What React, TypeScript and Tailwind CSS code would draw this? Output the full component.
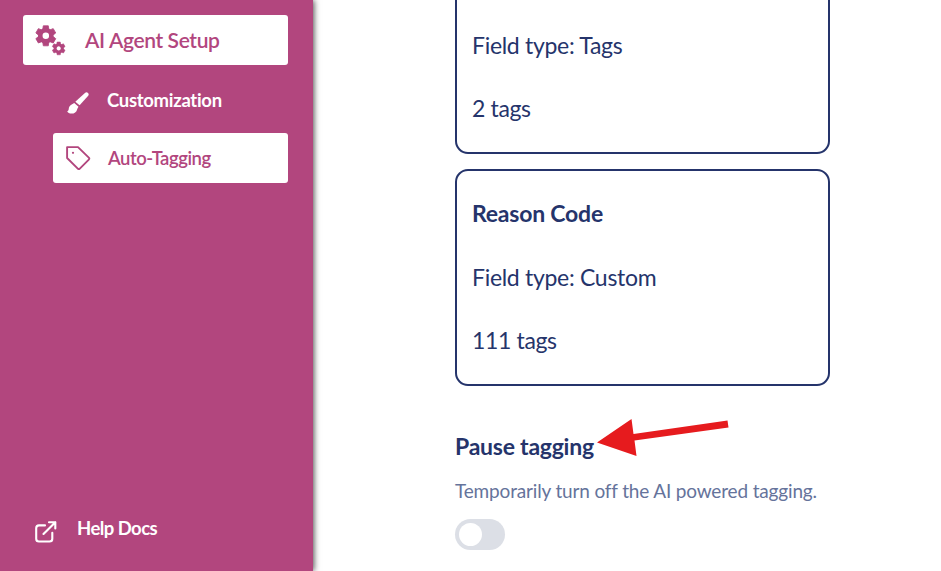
import type { ReactNode } from "react";

function Gear({ cx, cy, r }: { cx: number; cy: number; r: number }) {
  const hub = r * 0.7;
  return (
    <g transform={`translate(${cx} ${cy})`}>
      {[0, 60, 120, 180, 240, 300].map((a) => (
        <path
          key={a}
          transform={`rotate(${a})`}
          d={`M${-r * 0.31} ${-hub * 0.85}L${-r * 0.25} ${-r}H${r * 0.25}L${r * 0.31} ${-hub * 0.85}Z`}
          fill="currentColor"
          stroke="currentColor"
          strokeWidth={r * 0.08}
          strokeLinejoin="round"
        />
      ))}
      <circle r={r * 0.55} fill="none" stroke="currentColor" strokeWidth={r * 0.45} />
    </g>
  );
}

function Gears() {
  return (
    <svg width="32" height="32" viewBox="0 0 32 32" className="mt-px shrink-0">
      <Gear cx={10.8} cy={10.8} r={10} />
      <Gear cx={23.7} cy={23.4} r={6.4} />
    </svg>
  );
}

function Brush() {
  return (
    <svg width="22" height="22" viewBox="0 0 22 22" className="mt-[5px] shrink-0" fill="currentColor">
      <path d="M18.2 0.8Q19.6 -0.3 21 0.9Q22.3 2.2 21.2 3.7L12.6 13.2L8.3 9.7Z" />
      <path d="M7.2 10.8L11.5 14.5Q10.4 16 10.2 17C9.6 20 7.2 21.4 4.6 21.4C2.4 21.4 0.8 20.5 0.2 19C1.8 18.8 1.6 17.2 1.9 15.6C2.4 13 5 12.2 7.2 10.8Z" transform="translate(0 0.2)" />
    </svg>
  );
}

function Tag() {
  return (
    <svg width="26" height="26" viewBox="0 0 26 26" className="shrink-0" fill="none" stroke="currentColor" strokeWidth="1.9" strokeLinejoin="round">
      <path d="M2.1 2.1H13L23.8 12.6Q24.8 13.6 23.8 14.6L14.8 23.6Q13.8 24.6 12.8 23.6L2.1 13Z" />
      <circle cx="8" cy="7.8" r="1.1" fill="currentColor" stroke="none" />
    </svg>
  );
}

function External() {
  return (
    <svg width="22" height="22" viewBox="0 0 22 22" className="mt-[7px] shrink-0" fill="none" stroke="currentColor" strokeWidth="2.1" strokeLinecap="round" strokeLinejoin="round">
      <path d="M10 4.4H4Q1.2 4.4 1.2 7.2V17.7Q1.2 20.5 4 20.5H14.5Q17.3 20.5 17.3 17.7V11.7" />
      <path d="M8.5 13L20.3 1.2M14 1.2H20.3V7.5" />
    </svg>
  );
}

function Card({ title, type, count }: { title?: string; type: string; count: string }) {
  return (
    <section className="flex h-[217px] w-[375px] shrink-0 flex-col justify-end gap-[31.5px] rounded-[13px] border-2 border-[#25346b] px-[15px] pb-[28px] text-[23px] leading-8">
      {title && <h3 className="font-bold tracking-[-0.22px]">{title}</h3>}
      <p className="tracking-[-0.3px]">{type}</p>
      <p className="tracking-[-0.35px]">{count}</p>
    </section>
  );
}

function Label({ children, className }: { children: ReactNode; className: string }) {
  return <span className={`whitespace-nowrap ${className}`}>{children}</span>;
}

export default function App() {
  return (
    <div className="flex h-[571px] w-[941px] overflow-hidden bg-white font-['Lato',sans-serif] text-[#25346b]">
      <aside className="flex w-[313px] shrink-0 flex-col bg-[#b2467e] pt-[15px] pr-[25px] pl-[23px] text-white shadow-[1px_0_6px_rgba(0,0,0,0.7)]">
        <a className="flex h-[50px] items-center rounded-[3px] bg-white pl-3 text-[#b2467e]">
          <Gears />
          <Label className="ml-[18px] text-[21px] font-semibold tracking-[-0.37px]">AI Agent Setup</Label>
        </a>
        <a className="mt-[10px] ml-[30px] flex h-[50px] items-center pl-[14px]">
          <Brush />
          <Label className="mt-px ml-[18px] text-[18.5px] font-bold tracking-[-0.3px]">Customization</Label>
        </a>
        <a className="mt-2 ml-[30px] flex h-[50px] items-center rounded-[3px] bg-white pl-3 text-[#b2467e]">
          <Tag />
          <Label className="mt-[2px] ml-[17px] text-[18.5px] font-semibold tracking-[-0.45px]">Auto-Tagging</Label>
        </a>
        <a className="mt-auto mb-[18px] flex h-[50px] items-center pl-3">
          <External />
          <Label className="mt-[2px] ml-[20px] text-[18.5px] font-bold tracking-[-0.55px]">Help Docs</Label>
        </a>
      </aside>
      <main className="flex flex-1 flex-col pl-[142px]">
        <div className="-mt-[63px] flex flex-col gap-[15px]">
          <Card type="Field type: Tags" count="2 tags" />
          <Card title="Reason Code" type="Field type: Custom" count="111 tags" />
        </div>
        <div className="relative mt-[44px] w-[375px]">
          <h2 className="text-[23px] leading-8 font-bold tracking-[-0.24px]">Pause tagging</h2>
          <svg className="absolute top-[-12px] left-[141px]" width="135" height="42" viewBox="0 0 135 42">
            <path d="M1 24.5L35.5 1L37.5 16L131.5 2.5L132.5 9.5L38.5 22.5L40.5 38Z" fill="#e61b1e" />
          </svg>
        </div>
        <p className="mt-[15px] text-[19px] leading-7 tracking-[-0.16px] whitespace-nowrap text-[#65739b]">Temporarily turn off the AI powered tagging.</p>
        <button type="button" role="switch" aria-checked="false" aria-label="Pause tagging" className="mt-[14px] flex h-[31px] w-[50px] items-center rounded-full bg-[#dcdfe6] pl-1">
          <span className="size-[23px] rounded-full bg-white" />
        </button>
      </main>
    </div>
  );
}
